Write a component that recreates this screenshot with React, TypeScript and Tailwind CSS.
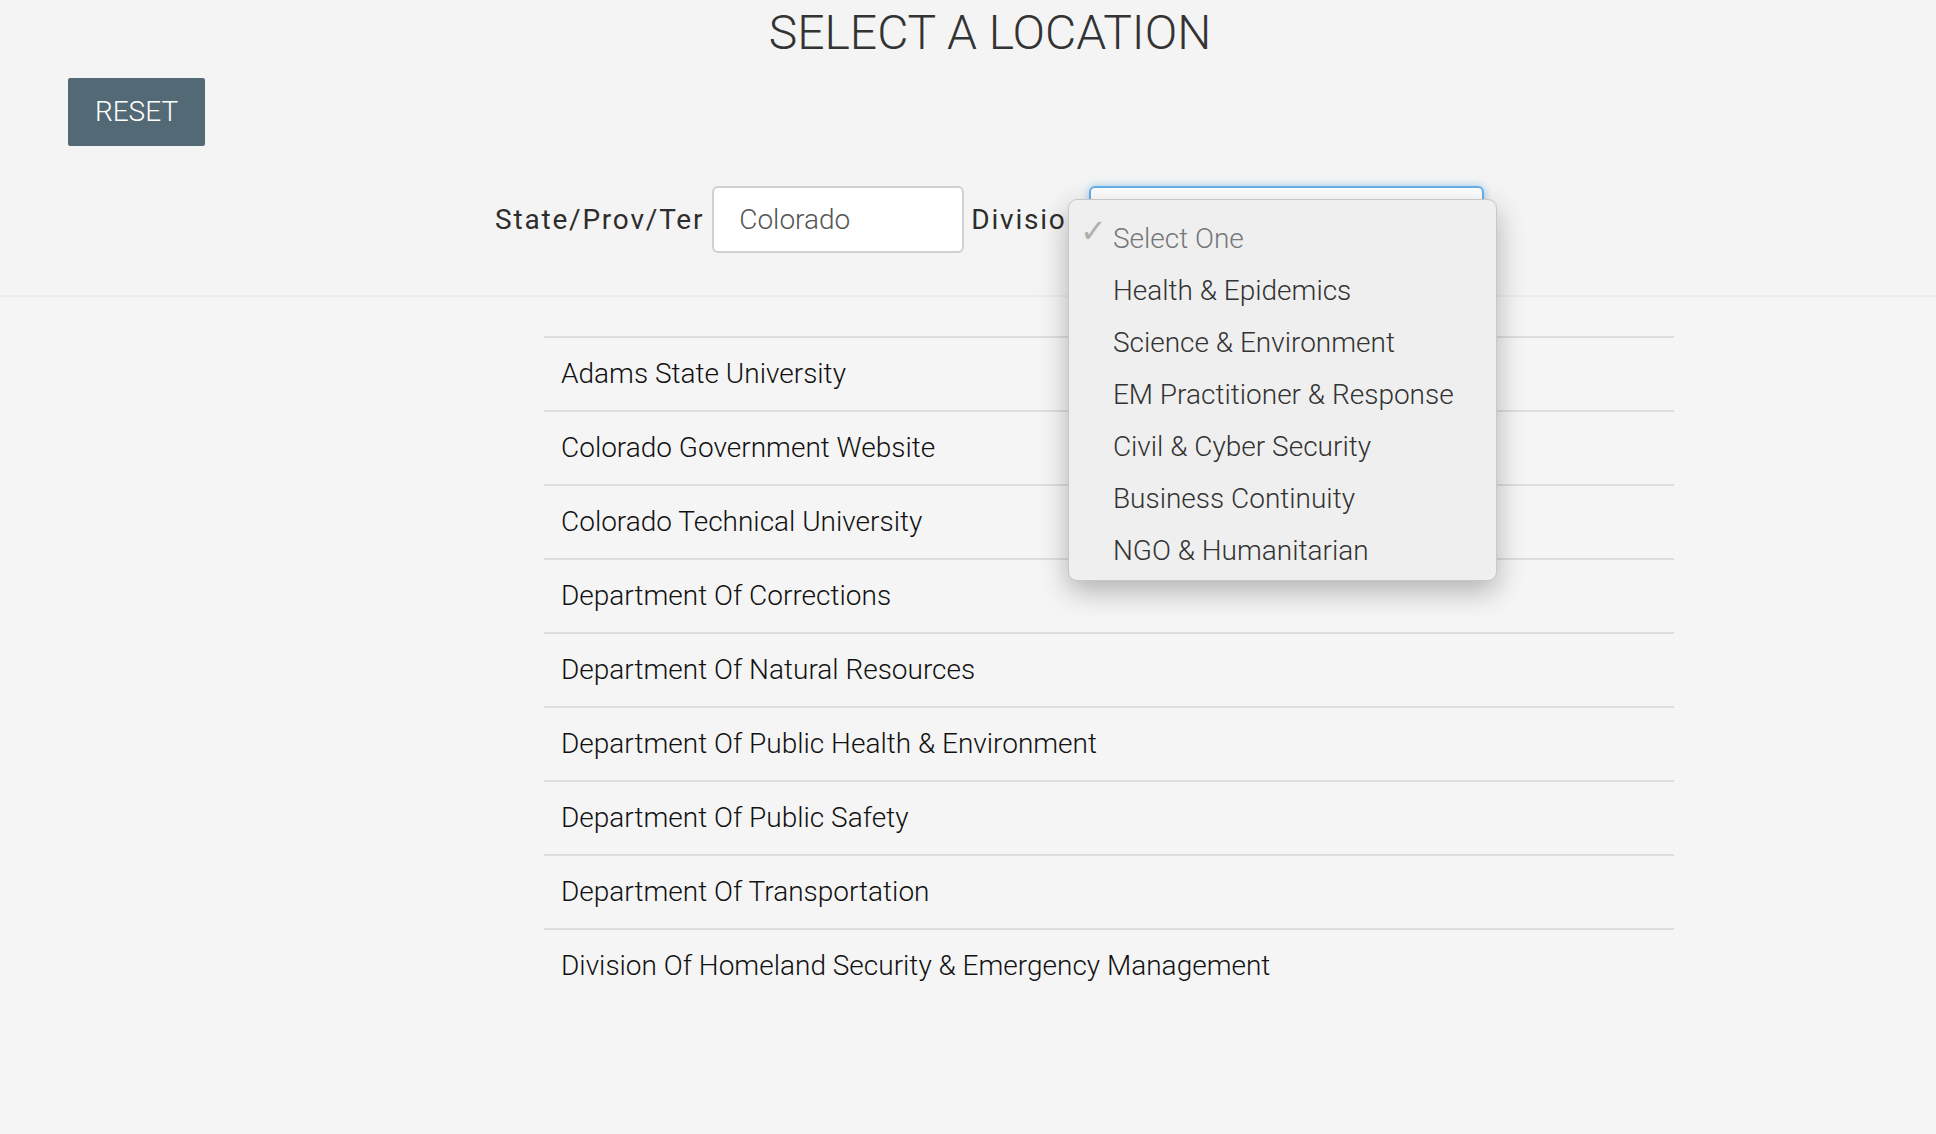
import React from "react";

const items = [
  "Adams State University",
  "Colorado Government Website",
  "Colorado Technical University",
  "Department Of Corrections",
  "Department Of Natural Resources",
  "Department Of Public Health & Environment",
  "Department Of Public Safety",
  "Department Of Transportation",
  "Division Of Homeland Security & Emergency Management",
];

const options = [
  "Health & Epidemics",
  "Science & Environment",
  "EM Practitioner & Response",
  "Civil & Cyber Security",
  "Business Continuity",
  "NGO & Humanitarian",
];

export default function App() {
  return (
    <div
      className="min-h-screen w-full bg-[#f5f5f5] text-[#222]"
      style={{ fontFamily: "Roboto, 'Liberation Sans', sans-serif" }}
    >
      <div className="h-[297px] border-b-2 border-[#ececec] bg-[#f4f4f4]">
        <h1 className="flex h-[62px] items-center justify-center pl-[44px] pt-[4px] text-[48px] font-light leading-none text-[#333]">
          SELECT A LOCATION
        </h1>
        <div className="pl-[68px] pt-[16px]">
          <button className="flex h-[68px] w-[137px] items-center justify-center rounded-[2px] bg-[#536a76] text-[28px] font-light text-white">
            RESET
          </button>
        </div>
        <div className="mt-[40px] flex h-[67px] items-center pl-[495px]">
          <span className="text-[28px] font-normal tracking-[1.8px] text-[#2d2d2d]">State/Prov/Ter</span>
          <div className="ml-[8px] flex h-[67px] w-[252px] items-center rounded-[6px] border-2 border-[#d0d0d0] bg-white pl-[25px] text-[28px] font-light text-[#555]">
            Colorado
          </div>
          <span className="ml-[7px] text-[28px] font-normal tracking-[1.8px] text-[#2d2d2d]">Division</span>
          <div className="relative ml-[5px]">
            <div className="h-[67px] w-[395px] rounded-[6px] border-2 border-[#66afe9] bg-white shadow-[0_0_8px_rgba(102,175,233,0.6)]" />
            <div className="absolute left-[-21px] top-[13px] z-10 w-[429px] rounded-[9px] border border-[#c8c8c8] bg-[#efefef] pb-[3px] pt-[13px] shadow-[0_10px_28px_rgba(0,0,0,0.28)]">
              <div className="relative flex h-[52px] items-center pl-[44px] text-[28px] font-light text-[#777]">
                <span className="absolute left-[11px] top-[2px] text-[32px] font-light leading-none text-[#b0b0b0]">✓</span>
                Select One
              </div>
              {options.map((o) => (
                <div key={o} className="flex h-[52px] items-center pl-[44px] text-[28px] font-light text-[#333]">
                  {o}
                </div>
              ))}
            </div>
          </div>
        </div>
      </div>
      <div className="ml-[544px] mt-[39px] w-[1130px]">
        {items.map((it) => (
          <div
            key={it}
            className="flex h-[74px] items-center border-t-2 border-[#dddddd] pl-[17px] text-[28px] font-light text-[#111]"
          >
            {it}
          </div>
        ))}
      </div>
    </div>
  );
}
